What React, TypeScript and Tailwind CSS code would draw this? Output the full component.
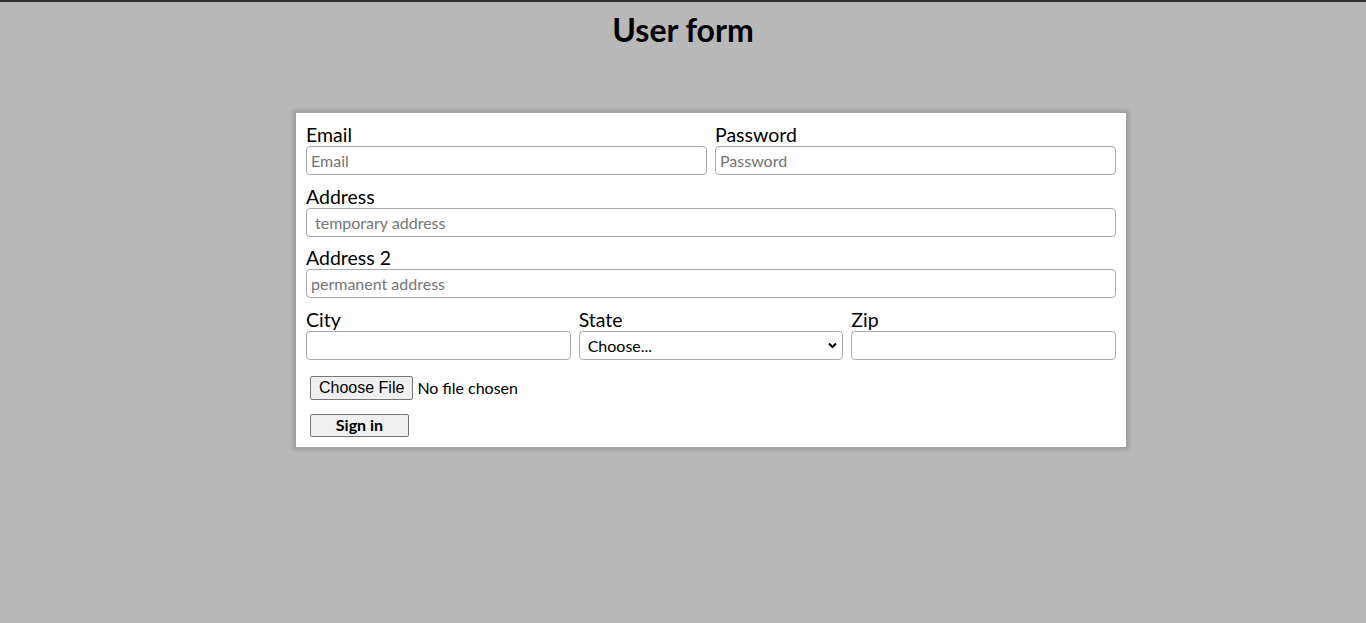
import React from 'react';

const fieldClass =
    'w-full h-[29px] border border-[#a9a9a9] rounded-[4px] bg-white px-[4px] text-[16px] text-black placeholder:text-[#757575] outline-none';

const Label = ({ children }: any) => (
    <label className="block text-[19.5px] leading-[23px] text-black">{children}</label>
);

const App = () => {
    return (
        <div
            className="min-h-[623px] bg-[#b8b8b8] border-t-2 border-[#2e2e2e]"
            style={{ fontFamily: 'Lato, "Liberation Sans", sans-serif' }}
        >
            {/* Title */}
            <h1 className="text-center text-[32px] font-bold leading-[40px] pt-[8px] text-black">User form</h1>

            {/* Form card */}
            <div className="ml-[296px] mt-[63px] w-[830px] bg-white p-[10px] shadow-[0_0_4px_3px_rgba(0,0,0,0.15)]">
                <div className="grid grid-cols-2 gap-x-[8px]">
                    <div>
                        <Label>Email</Label>
                        <input className={fieldClass} placeholder="Email" />
                    </div>
                    <div>
                        <Label>Password</Label>
                        <input className={fieldClass} placeholder="Password" type="password" />
                    </div>
                </div>

                <div className="mt-[10px]">
                    <Label>Address</Label>
                    <input className={fieldClass + ' pl-[8px]'} placeholder="temporary address" />
                </div>

                <div className="mt-[9px]">
                    <Label>Address 2</Label>
                    <input className={fieldClass} placeholder="permanent address" />
                </div>

                <div className="mt-[10px] grid grid-cols-3 gap-x-[8px]">
                    <div>
                        <Label>City</Label>
                        <input className={fieldClass} />
                    </div>
                    <div>
                        <Label>State</Label>
                        <div className="relative">
                            <select className={fieldClass + ' appearance-none pl-[8px]'}>
                                <option>Choose...</option>
                                <option>...</option>
                            </select>
                            <svg
                                className="absolute right-[6px] top-[11px] pointer-events-none"
                                width="9"
                                height="7"
                                viewBox="0 0 9 7"
                            >
                                <path d="M1 1.5 L4.5 5 L8 1.5" fill="none" stroke="#000" strokeWidth="2" />
                            </svg>
                        </div>
                    </div>
                    <div>
                        <Label>Zip</Label>
                        <input className={fieldClass} />
                    </div>
                </div>

                {/* File picker */}
                <div className="mt-[16px] ml-[4px] flex items-center">
                    <span
                        className="h-[24px] px-[8px] flex items-center border border-[#767676] rounded-[2px] bg-[#efefef] text-[16px] text-black"
                        style={{ fontFamily: '"Liberation Sans", Arial, sans-serif' }}
                    >
                        Choose File
                    </span>
                    <span className="ml-[4px] text-[16px] text-black">No file chosen</span>
                </div>

                {/* Submit */}
                <div className="mt-[13px] ml-[4px]">
                    <button className="w-[99px] h-[23px] border border-[#767676] rounded-[2px] bg-[#efefef] text-[16px] font-bold leading-none text-black">
                        Sign in
                    </button>
                </div>
            </div>
        </div>
    );
};

export default App;
